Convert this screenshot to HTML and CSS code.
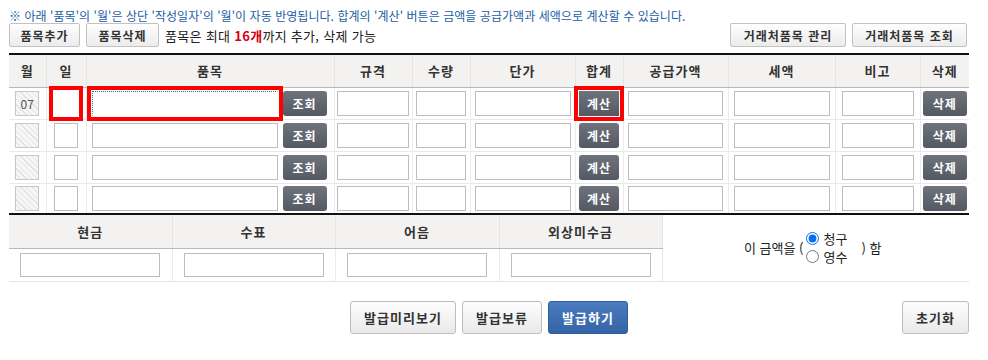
FILE: index.html
```html
<!DOCTYPE html>
<html lang="ko">
<head>
<meta charset="utf-8">
<title>품목</title>
<link rel="stylesheet" href="styles.css">
</head>
<body>
<div class="page">
  <p class="notice">※ 아래 '품목'의 '월'은 상단 '작성일자'의 '월'이 자동 반영됩니다. 합계의 '계산' 버튼은 금액을 공급가액과 세액으로 계산할 수 있습니다.</p>

  <div class="toolbar">
    <div class="tool-left">
      <button class="btn btn-add">품목추가</button>
      <button class="btn btn-del">품목삭제</button>
      <span class="limit">품목은 최대 <b>16개</b>까지 추가, 삭제 가능</span>
    </div>
    <div class="tool-right">
      <button class="btn btn-manage">거래처품목 관리</button>
      <button class="btn btn-search">거래처품목 조회</button>
    </div>
  </div>

  <table class="items">
    <colgroup>
      <col class="c-mon"><col class="c-day"><col class="c-item"><col class="c-spec"><col class="c-qty"><col class="c-price"><col class="c-sum"><col class="c-supply"><col class="c-tax"><col class="c-note"><col class="c-delete">
    </colgroup>
    <thead>
      <tr>
        <th>월</th><th>일</th><th>품목</th><th>규격</th><th>수량</th><th>단가</th><th>합계</th><th>공급가액</th><th>세액</th><th>비고</th><th>삭제</th>
      </tr>
    </thead>
    <tbody>
      <tr>
        <td><input class="in in-mon hatch" value="07" disabled></td>
        <td><input class="in in-day hl hl-day"></td>
        <td><div class="item-cell"><input class="in in-item hl hl-item"><button class="dk dk-find">조회</button></div></td>
        <td><input class="in in-spec"></td>
        <td><input class="in in-qty"></td>
        <td><input class="in in-price"></td>
        <td><button class="dk dk-calc hl hl-btn">계산</button></td>
        <td><input class="in in-supply"></td>
        <td><input class="in in-tax"></td>
        <td><input class="in in-note"></td>
        <td><button class="dk dk-del">삭제</button></td>
      </tr>
      <tr>
        <td><input class="in in-mon hatch" disabled></td>
        <td><input class="in in-day"></td>
        <td><div class="item-cell"><input class="in in-item"><button class="dk dk-find">조회</button></div></td>
        <td><input class="in in-spec"></td>
        <td><input class="in in-qty"></td>
        <td><input class="in in-price"></td>
        <td><button class="dk dk-calc">계산</button></td>
        <td><input class="in in-supply"></td>
        <td><input class="in in-tax"></td>
        <td><input class="in in-note"></td>
        <td><button class="dk dk-del">삭제</button></td>
      </tr>
      <tr>
        <td><input class="in in-mon hatch" disabled></td>
        <td><input class="in in-day"></td>
        <td><div class="item-cell"><input class="in in-item"><button class="dk dk-find">조회</button></div></td>
        <td><input class="in in-spec"></td>
        <td><input class="in in-qty"></td>
        <td><input class="in in-price"></td>
        <td><button class="dk dk-calc">계산</button></td>
        <td><input class="in in-supply"></td>
        <td><input class="in in-tax"></td>
        <td><input class="in in-note"></td>
        <td><button class="dk dk-del">삭제</button></td>
      </tr>
      <tr>
        <td><input class="in in-mon hatch" disabled></td>
        <td><input class="in in-day"></td>
        <td><div class="item-cell"><input class="in in-item"><button class="dk dk-find">조회</button></div></td>
        <td><input class="in in-spec"></td>
        <td><input class="in in-qty"></td>
        <td><input class="in in-price"></td>
        <td><button class="dk dk-calc">계산</button></td>
        <td><input class="in in-supply"></td>
        <td><input class="in in-tax"></td>
        <td><input class="in in-note"></td>
        <td><button class="dk dk-del">삭제</button></td>
      </tr>
    </tbody>
  </table>

  <table class="pay">
    <colgroup>
      <col class="p-col"><col class="p-col"><col class="p-col3"><col class="p-col"><col class="p-radio">
    </colgroup>
    <tr>
      <th>현금</th><th>수표</th><th>어음</th><th>외상미수금</th>
      <td class="radio-cell" rowspan="2">
        <div class="radio-wrap">
          <span>이 금액을 (</span>
          <span class="radios">
            <label class="rd"><input type="radio" name="kind" checked><span>청구</span></label>
            <label class="rd"><input type="radio" name="kind"><span>영수</span></label>
          </span>
          <span>) 함</span>
        </div>
      </td>
    </tr>
    <tr>
      <td><input class="in in-pay"></td>
      <td><input class="in in-pay"></td>
      <td><input class="in in-pay"></td>
      <td><input class="in in-pay"></td>
    </tr>
  </table>

  <div class="actions">
    <div></div>
    <div class="act-mid">
      <button class="btn btn-big btn-preview">발급미리보기</button>
      <button class="btn btn-big btn-hold">발급보류</button>
      <button class="btn btn-big btn-issue">발급하기</button>
    </div>
    <div class="act-right">
      <button class="btn btn-big btn-reset">초기화</button>
    </div>
  </div>
</div>
</body>
</html>
```

FILE: styles.css
```css
* { box-sizing: border-box; }
body {
  margin: 0;
  background: #fff;
  font-family: "Noto Sans CJK KR", "Noto Sans", sans-serif;
  font-size: 12px;
  color: #222;
}
.page {
  width: 960px;
  margin-left: 9px;
  padding-top: 8px;
}
.notice {
  margin: 0;
  height: 15px;
  line-height: 15px;
  font-size: 12px;
  color: #1b5ea3;
  letter-spacing: 0.05px;
  white-space: nowrap;
}
.toolbar {
  display: flex;
  justify-content: space-between;
  align-items: center;
  height: 24px;
}
.tool-left, .tool-right {
  display: flex;
  align-items: center;
  gap: 6px;
}
.tool-right { margin-right: 2px; }
.btn {
  font-family: inherit;
  font-size: 12px;
  font-weight: bold;
  color: #333;
  background: linear-gradient(#fefefe, #ececec);
  border: 1px solid #c2c2c2;
  border-radius: 2px;
  height: 24px;
  padding: 0;
  letter-spacing: 1px;
  cursor: pointer;
}
.btn-add { width: 71px; }
.btn-del { width: 73px; }
.btn-manage { width: 116px; }
.btn-search { width: 115px; }
.limit {
  font-size: 13px;
  color: #222;
  letter-spacing: 0.3px;
}
.limit b { color: #d60012; }

/* main item table */
.items {
  width: 960px;
  margin-top: 6px;
  border-collapse: collapse;
  table-layout: fixed;
  border-top: 2px solid #111;
  border-bottom: 2px solid #111;
}
.c-mon { width: 37px; }
.c-day { width: 40px; }
.c-item { width: 248px; }
.c-spec { width: 78px; }
.c-qty { width: 58px; }
.c-price { width: 105px; }
.c-sum { width: 48px; }
.c-supply { width: 105px; }
.c-tax { width: 107px; }
.c-note { width: 85px; }
.c-delete { width: 49px; }

.items th, .pay th {
  height: 33px;
  background: #f3f2f0;
  font-size: 13px;
  font-weight: bold;
  color: #333;
  border-bottom: 1px solid #b9b9b9;
  border-left: 1px solid #e6e5e3;
  padding: 0;
  letter-spacing: 1px;
}
.items th:first-child, .pay th:first-child { border-left: 0; }
.items td {
  height: 32px;
  padding: 0;
  text-align: center;
  vertical-align: middle;
  border-bottom: 1px solid #e9e9e9;
  border-left: 1px solid #ececec;
}
.items td:first-child { border-left: 0; }
.items tbody tr:last-child td { border-bottom: 0; height: 31px; }

.in {
  font-family: inherit;
  font-size: 12px;
  height: 25px;
  border: 1px solid #bdbdbd;
  background: #fff;
  padding: 0;
  margin: 0;
  vertical-align: middle;
  text-align: center;
  color: #555;
}
.hatch {
  background: repeating-linear-gradient(45deg, #f6f6f6 0 3px, #e2e2e2 3px 4px);
  border-color: #c6c6c6;
}
.in-mon { width: 24px; }
.in-day { width: 24px; }
.in-item { width: 186px; }
.in-spec { width: 72px; }
.in-qty { width: 50px; }
.in-price { width: 96px; }
.in-supply { width: 95px; }
.in-tax { width: 96px; }
.in-note { width: 72px; }
.in-pay { width: 140px; height: 24px; }

.item-cell {
  display: flex;
  align-items: center;
  gap: 5px;
  padding-left: 5px;
}

.dk {
  font-family: inherit;
  font-size: 12px;
  font-weight: bold;
  color: #fff;
  height: 25px;
  border: 0;
  border-radius: 3px;
  background: linear-gradient(#6e737c, #545862);
  padding: 0;
  letter-spacing: 1px;
  vertical-align: middle;
}
.dk-find { width: 44px; }
.dk-calc { width: 40px; }
.dk-del { width: 44px; }

.hl {
  box-shadow: 0 0 0 1px #fff, 0 0 0 5px #ff0000;
}
.hl-btn { border-radius: 0; }
.hl-day { border-color: #fff; }
.hl-item { border: 1px dotted #17858f; border-right-color: #fff; border-bottom-color: #fff; }

/* payment table */
.pay {
  width: 960px;
  border-collapse: collapse;
  table-layout: fixed;
}
.p-col { width: 163px; }
.p-col3 { width: 164px; }
.p-radio { width: 307px; }
.pay th:nth-child(4) { border-right: 1px solid #e6e5e3; }
.pay td {
  height: 33px;
  padding: 0;
  text-align: center;
  vertical-align: middle;
  border-bottom: 1px solid #e6e6e6;
  border-left: 1px solid #ececec;
}
.pay tr:last-child td:first-child { border-left: 0; }
.pay .radio-cell {
  border-left: 1px solid #e6e6e6;
  border-bottom: 1px solid #e6e6e6;
}
.radio-wrap {
  display: inline-flex;
  align-items: center;
  gap: 2px;
  font-size: 13px;
  color: #222;
  margin-left: -6px;
}
.radios {
  display: inline-flex;
  flex-direction: column;
  text-align: left;
  width: 54px;
}
.rd {
  display: flex;
  align-items: center;
  gap: 5px;
  height: 18px;
  line-height: 18px;
}
.rd input {
  margin: 0;
  width: 13px;
  height: 13px;
  accent-color: #0a6ef0;
}

/* bottom actions */
.actions {
  display: grid;
  grid-template-columns: 1fr auto 1fr;
  margin-top: 19px;
  align-items: center;
}
.act-mid {
  display: flex;
  gap: 6px;
}
.act-right {
  display: flex;
  justify-content: flex-end;
}
.btn-big {
  height: 33px;
  font-size: 13px;
  border-radius: 3px;
  border-color: #bdbdbd;
  background: linear-gradient(#fdfdfd, #e9e9e9);
}
.btn-preview { width: 106px; }
.btn-hold { width: 80px; }
.btn-issue {
  width: 80px;
  color: #fff;
  border-color: #2f5e9e;
  background: linear-gradient(#4a7cbf, #3563a6);
}
.btn-reset { width: 67px; }
```
